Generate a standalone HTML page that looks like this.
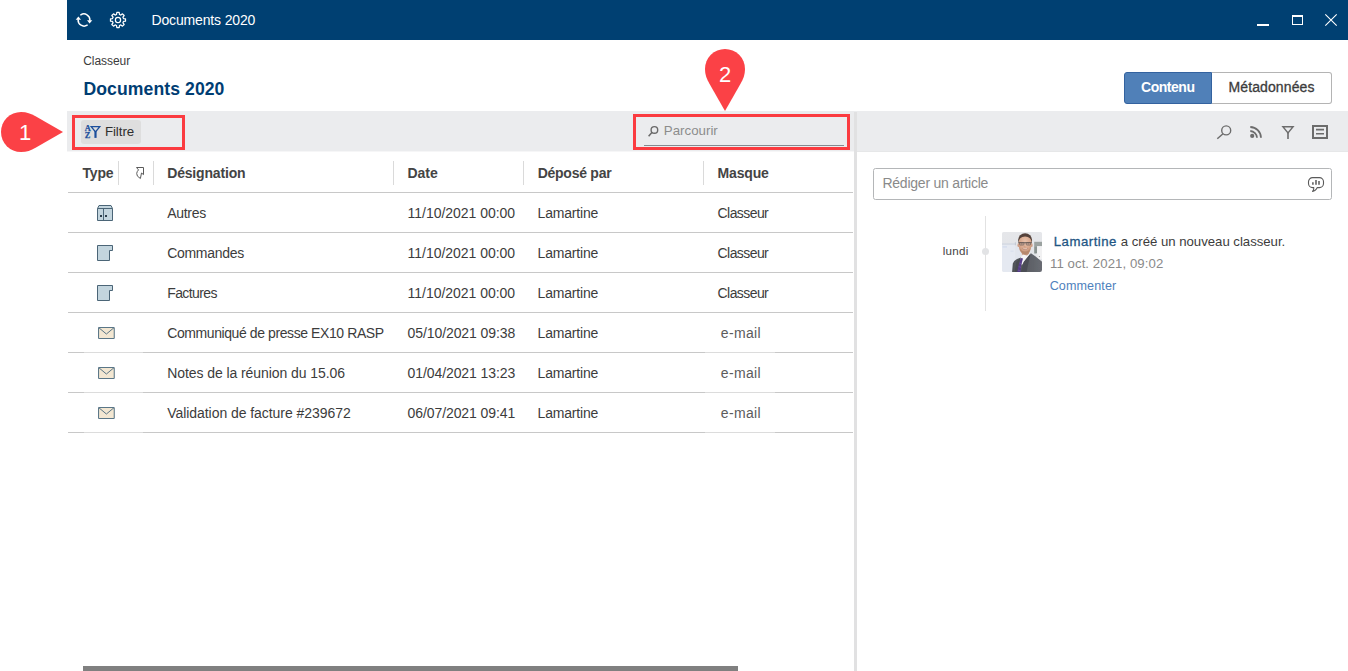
<!DOCTYPE html>
<html lang="fr">
<head>
<meta charset="utf-8">
<title>Documents 2020</title>
<style>
*{box-sizing:border-box;margin:0;padding:0}
html,body{width:1348px;height:671px;overflow:hidden;background:#fff}
body{position:relative;font-family:"Liberation Sans",Arial,sans-serif;color:#333;font-size:14px}
.a{position:absolute}
.t{position:absolute;white-space:nowrap;line-height:1}
svg{position:absolute;overflow:visible}
#titlebar{left:67px;top:0;width:1281px;height:40px;background:#004072}
#tab1{left:1124px;top:72px;width:88px;height:32px;background:#5080b8;border:1px solid #33629f;border-radius:3px 0 0 3px}
#tab2{left:1212px;top:72px;width:120px;height:32px;background:#fff;border:1px solid #b4b4b4;border-left:none;border-radius:0 3px 3px 0}
#ltool{left:67px;top:111px;width:790px;height:41px;background:linear-gradient(#ebecee 0,#ebecee 40px,#f6f6f7 40px)}
#rtool{left:857px;top:111px;width:491px;height:41px;background:linear-gradient(#ebecee 0,#ebecee 40px,#e6e7e8 40px)}
#vdiv{left:854px;top:112px;width:3px;height:559px;background:#e1e1e2}
#filtbtn{left:81px;top:120px;width:60px;height:24px;background:#dedede;border-radius:3px}
.rb{border:3px solid #fb3b40}
#rb1{left:72px;top:115px;width:113px;height:35px}
#rb2{left:633px;top:114px;width:217px;height:36px}
#sline{left:644px;top:145px;width:200px;height:1px;background:#858a90}
.hs{position:absolute;top:161px;width:1px;height:24px;background:#dadada}
.rl{position:absolute;left:68px;width:785px;height:1px;background:#c8c8c8}
#hscroll{left:83px;top:666px;width:655px;height:5px;background:#808080}
#post{left:873px;top:168px;width:459px;height:32px;border:1px solid #b4b6b8;border-radius:2.5px;background:#fff}
#tline{left:985px;top:216px;width:1px;height:95px;background:#e2e2e2}
#tdot{left:982px;top:248px;width:7px;height:7px;border-radius:50%;background:#e2e3e5}
</style>
</head>
<body>
<div id="titlebar" class="a"></div>
<span class="t" style="left:151.5px;top:13.15px;font-size:14px;color:#fff;letter-spacing:-0.153px;">Documents 2020</span>
<svg style="left:74px;top:10px" width="20" height="20" viewBox="-10 -10 20 20">
<g fill="none" stroke="#fff" stroke-width="1.5" stroke-linecap="round">
<path d="M-3.2,-5.2 A6,6 0 0 1 5.9,0.2"/>
<path d="M3.2,5.2 A6,6 0 0 1 -5.9,-0.2"/>
</g>
<path d="M3,0.2 L8.3,0.2 L5.6,3.4 Z" fill="#fff"/>
<path d="M-3,-0.2 L-8.3,-0.2 L-5.6,-3.4 Z" fill="#fff"/>
</svg>
<svg style="left:108px;top:10px" width="20" height="20" viewBox="-10 -10 20 20">
<path d="M-1.48,-5.51 L-1.19,-7.51 L1.19,-7.51 L1.48,-5.51 L2.85,-4.94 L4.47,-6.15 L6.15,-4.47 L4.94,-2.85 L5.51,-1.48 L7.51,-1.19 L7.51,1.19 L5.51,1.48 L4.94,2.85 L6.15,4.47 L4.47,6.15 L2.85,4.94 L1.48,5.51 L1.19,7.51 L-1.19,7.51 L-1.48,5.51 L-2.85,4.94 L-4.47,6.15 L-6.15,4.47 L-4.94,2.85 L-5.51,1.48 L-7.51,1.19 L-7.51,-1.19 L-5.51,-1.48 L-4.94,-2.85 L-6.15,-4.47 L-4.47,-6.15 L-2.85,-4.94 Z" fill="none" stroke="#fff" stroke-width="1.25" stroke-linejoin="round"/>
<circle r="2.6" fill="none" stroke="#fff" stroke-width="1.25"/>
</svg>
<svg style="left:1248px;top:0" width="100" height="40" viewBox="0 0 100 40">
<rect x="9" y="24" width="12" height="2" fill="#fff"/>
<rect x="44.5" y="16" width="10" height="8.5" fill="none" stroke="#fff" stroke-width="1"/>
<rect x="44" y="15" width="11" height="2" fill="#fff"/>
<path d="M77.3,14.3 L88.7,25.7 M88.7,14.3 L77.3,25.7" stroke="#fff" stroke-width="1.1" fill="none"/>
</svg>
<span class="t" style="left:83.2px;top:54.54px;font-size:12px;color:#3b3b3b;letter-spacing:-0.045px;">Classeur</span>
<span class="t" style="left:83.5px;top:80.60px;font-size:17.6px;font-weight:700;color:#003d73;letter-spacing:0.083px;">Documents 2020</span>
<div id="tab1" class="a"></div><div id="tab2" class="a"></div>
<span class="t" style="left:1141px;top:80.15px;font-size:14px;font-weight:700;color:#fff;letter-spacing:-0.467px;">Contenu</span>
<span class="t" style="left:1228.6px;top:80.05px;font-size:14px;color:#3c3c3c;letter-spacing:0.096px;-webkit-text-stroke:0.3px #3c3c3c;">Métadonnées</span>
<div id="ltool" class="a"></div><div id="rtool" class="a"></div><div id="vdiv" class="a"></div>
<div id="filtbtn" class="a"></div>
<svg style="left:84px;top:124px" width="18" height="15" viewBox="0 0 18 15">
<text x="0.7" y="6.9" font-family="'Liberation Serif',serif" font-weight="700" font-size="8.4" fill="#1c4f9c" stroke="#1c4f9c" stroke-width="0.25">A</text>
<text x="0.7" y="13.9" font-family="'Liberation Serif',serif" font-weight="700" font-size="8.4" fill="#1c4f9c" stroke="#1c4f9c" stroke-width="0.25">Z</text>
<path d="M7.2,2.6 L15.8,2.6 L11.5,8 Z" fill="none" stroke="#1c4f9c" stroke-width="1.3" stroke-linejoin="miter"/>
<path d="M11.5,7.3 L11.5,13.9" stroke="#1c4f9c" stroke-width="2.2" fill="none"/>
</svg>
<span class="t" style="left:104.9px;top:125.44px;font-size:13.3px;color:#2f2f2f;letter-spacing:-0.060px;">Filtre</span>
<div id="sline" class="a"></div>
<svg style="left:647px;top:124px" width="13" height="14" viewBox="0 0 13 14">
<circle cx="7.4" cy="5.9" r="3.3" fill="none" stroke="#6a6a6a" stroke-width="1.4"/>
<path d="M5.1,8.3 L1.6,12.2" stroke="#6a6a6a" stroke-width="1.5" fill="none"/>
</svg>
<span class="t" style="left:663.8px;top:124.44px;font-size:13.3px;color:#8c8c8c;letter-spacing:0.005px;">Parcourir</span>
<div id="rb1" class="a rb"></div><div id="rb2" class="a rb"></div>
<svg style="left:1210px;top:120px" width="130" height="24" viewBox="0 0 130 24">
<g fill="none" stroke="#6c6c6c">
<circle cx="16.2" cy="10.4" r="4.5" stroke-width="1.4"/>
<path d="M13,13.7 L7.3,18.7" stroke-width="1.5"/>
<path d="M40.3,7 A11,11 0 0 1 51,17.7" stroke-width="1.8"/>
<path d="M40.3,11 A7,7 0 0 1 47,17.7" stroke-width="1.8"/>
<path d="M72.9,6.8 L83.1,6.8 L78,12.9 Z" stroke-width="1.4"/>
<path d="M78,12.4 L78,18.9" stroke-width="1.6"/>
<rect x="103" y="6" width="14" height="12" stroke-width="2"/>
<path d="M106,9.6 L114,9.6 M106,13.7 L114,13.7" stroke-width="1.6"/>
</g>
<circle cx="42.2" cy="15.9" r="2.1" fill="#6c6c6c"/>
</svg>
<span class="t" style="left:82.5px;top:166.15px;font-size:14px;font-weight:700;color:#444;letter-spacing:-0.160px;">Type</span>
<span class="t" style="left:167.2px;top:166.15px;font-size:14px;font-weight:700;color:#444;letter-spacing:-0.166px;">Désignation</span>
<span class="t" style="left:407.6px;top:166.15px;font-size:14px;font-weight:700;color:#444;letter-spacing:-0.090px;">Date</span>
<span class="t" style="left:537.7px;top:166.15px;font-size:14px;font-weight:700;color:#444;letter-spacing:-0.255px;">Déposé par</span>
<span class="t" style="left:717.6px;top:166.15px;font-size:14px;font-weight:700;color:#444;letter-spacing:-0.188px;">Masque</span>
<div class="hs" style="left:118px"></div>
<div class="hs" style="left:153px"></div>
<div class="hs" style="left:393px"></div>
<div class="hs" style="left:523px"></div>
<div class="hs" style="left:703px"></div>
<svg style="left:136px;top:167px" width="9" height="13" viewBox="0 0 9 13">
<path d="M0.5,0.5 L7.5,0.5 L7.5,7.6 L5.5,6 L4.4,11.5 Q0.3,9.3 0.7,6.4 Q1,4.4 2.5,2.9 Z" fill="none" stroke="#5a5a5a" stroke-width="1" stroke-linejoin="miter"/>
</svg>
<div class="rl" style="top:192px"></div>
<div class="rl" style="top:232px"></div>
<div class="rl" style="top:272px"></div>
<div class="rl" style="top:312px"></div>
<div class="rl" style="top:352px"></div>
<div class="rl" style="top:392px"></div>
<div class="rl" style="top:432px"></div>
<svg style="left:96px;top:204px" width="18" height="18" viewBox="0 0 18 18">
<path d="M1.5,4.5 L3,1.5 L15,1.5 L16.5,4.5 L16.5,16.5 L1.5,16.5 Z" fill="#c3d5de" stroke="#4b6577" stroke-width="1" stroke-linejoin="miter"/>
<path d="M1.5,4.5 L16.5,4.5 M7.5,4.5 L7.5,16.5" stroke="#4b6577" stroke-width="1" fill="none"/>
<rect x="4" y="11" width="2" height="2" fill="#2d3e4b"/><rect x="9" y="11" width="2" height="2" fill="#2d3e4b"/>
</svg>
<span class="t" style="left:167.2px;top:206.15px;font-size:14px;color:#3c3c3c;letter-spacing:-0.286px;">Autres</span>
<span class="t" style="left:407.6px;top:206.15px;font-size:14px;color:#3c3c3c;letter-spacing:-0.028px;">11/10/2021 00:00</span>
<span class="t" style="left:537.6px;top:206.15px;font-size:14px;color:#3c3c3c;letter-spacing:-0.196px;">Lamartine</span>
<span class="t" style="left:717.6px;top:206.15px;font-size:14px;color:#3c3c3c;letter-spacing:-0.581px;">Classeur</span>
<svg style="left:96px;top:244px" width="18" height="18" viewBox="0 0 18 18">
<path d="M1.5,1.5 L16.5,1.5 L16.5,6.5 L13.5,6.5 L13.5,16.5 L1.5,16.5 Z" fill="#c3d5de" stroke="#4b6577" stroke-width="1" stroke-linejoin="miter"/>
</svg>
<span class="t" style="left:167.2px;top:246.15px;font-size:14px;color:#3c3c3c;letter-spacing:-0.292px;">Commandes</span>
<span class="t" style="left:407.6px;top:246.15px;font-size:14px;color:#3c3c3c;letter-spacing:-0.028px;">11/10/2021 00:00</span>
<span class="t" style="left:537.6px;top:246.15px;font-size:14px;color:#3c3c3c;letter-spacing:-0.196px;">Lamartine</span>
<span class="t" style="left:717.6px;top:246.15px;font-size:14px;color:#3c3c3c;letter-spacing:-0.581px;">Classeur</span>
<svg style="left:96px;top:284px" width="18" height="18" viewBox="0 0 18 18">
<path d="M1.5,1.5 L16.5,1.5 L16.5,6.5 L13.5,6.5 L13.5,16.5 L1.5,16.5 Z" fill="#c3d5de" stroke="#4b6577" stroke-width="1" stroke-linejoin="miter"/>
</svg>
<span class="t" style="left:167.2px;top:286.15px;font-size:14px;color:#3c3c3c;letter-spacing:-0.590px;">Factures</span>
<span class="t" style="left:407.6px;top:286.15px;font-size:14px;color:#3c3c3c;letter-spacing:-0.028px;">11/10/2021 00:00</span>
<span class="t" style="left:537.6px;top:286.15px;font-size:14px;color:#3c3c3c;letter-spacing:-0.196px;">Lamartine</span>
<span class="t" style="left:717.6px;top:286.15px;font-size:14px;color:#3c3c3c;letter-spacing:-0.581px;">Classeur</span>
<svg style="left:97px;top:326px" width="19" height="14" viewBox="0 0 19 14">
<rect x="1.55" y="1.5" width="15.7" height="11" rx="0.6" fill="#f3e7d2" stroke="#5a7687" stroke-width="1.05"/>
<path d="M1.8,1.7 L9.4,8 L17,1.7" fill="none" stroke="#5a7687" stroke-width="1"/>
</svg>
<span class="t" style="left:167.2px;top:326.15px;font-size:14px;color:#3c3c3c;letter-spacing:-0.410px;">Communiqué de presse EX10 RASP</span>
<span class="t" style="left:407.6px;top:326.15px;font-size:14px;color:#3c3c3c;letter-spacing:-0.094px;">05/10/2021 09:38</span>
<span class="t" style="left:537.6px;top:326.15px;font-size:14px;color:#3c3c3c;letter-spacing:-0.196px;">Lamartine</span>
<span class="t" style="left:720.8px;top:326.15px;font-size:14px;color:#5c5c5c;letter-spacing:0.346px;">e-mail</span>
<svg style="left:97px;top:366px" width="19" height="14" viewBox="0 0 19 14">
<rect x="1.55" y="1.5" width="15.7" height="11" rx="0.6" fill="#f3e7d2" stroke="#5a7687" stroke-width="1.05"/>
<path d="M1.8,1.7 L9.4,8 L17,1.7" fill="none" stroke="#5a7687" stroke-width="1"/>
</svg>
<span class="t" style="left:167.2px;top:366.15px;font-size:14px;color:#3c3c3c;letter-spacing:-0.074px;">Notes de la réunion du 15.06</span>
<span class="t" style="left:407.6px;top:366.15px;font-size:14px;color:#3c3c3c;letter-spacing:-0.094px;">01/04/2021 13:23</span>
<span class="t" style="left:537.6px;top:366.15px;font-size:14px;color:#3c3c3c;letter-spacing:-0.196px;">Lamartine</span>
<span class="t" style="left:720.8px;top:366.15px;font-size:14px;color:#5c5c5c;letter-spacing:0.346px;">e-mail</span>
<svg style="left:97px;top:406px" width="19" height="14" viewBox="0 0 19 14">
<rect x="1.55" y="1.5" width="15.7" height="11" rx="0.6" fill="#f3e7d2" stroke="#5a7687" stroke-width="1.05"/>
<path d="M1.8,1.7 L9.4,8 L17,1.7" fill="none" stroke="#5a7687" stroke-width="1"/>
</svg>
<span class="t" style="left:167.2px;top:406.15px;font-size:14px;color:#3c3c3c;letter-spacing:-0.052px;">Validation de facture #239672</span>
<span class="t" style="left:407.6px;top:406.15px;font-size:14px;color:#3c3c3c;letter-spacing:-0.094px;">06/07/2021 09:41</span>
<span class="t" style="left:537.6px;top:406.15px;font-size:14px;color:#3c3c3c;letter-spacing:-0.196px;">Lamartine</span>
<span class="t" style="left:720.8px;top:406.15px;font-size:14px;color:#5c5c5c;letter-spacing:0.346px;">e-mail</span>
<div class="a" style="left:84px;top:352px;width:59px;height:1px;background:#dcdcdc"></div><div class="a" style="left:705px;top:352px;width:70px;height:1px;background:#dcdcdc"></div>
<div class="a" style="left:84px;top:392px;width:59px;height:1px;background:#dcdcdc"></div><div class="a" style="left:705px;top:392px;width:70px;height:1px;background:#dcdcdc"></div>
<div class="a" style="left:84px;top:432px;width:59px;height:1px;background:#dcdcdc"></div><div class="a" style="left:705px;top:432px;width:70px;height:1px;background:#dcdcdc"></div>
<div id="hscroll" class="a"></div>
<div id="post" class="a"></div>
<span class="t" style="left:882.4px;top:176.15px;font-size:14px;color:#8a8a8a;letter-spacing:-0.219px;">Rédiger un article</span>
<svg style="left:1307px;top:176px" width="18" height="17" viewBox="0 0 18 17">
<path d="M5.6,1.6 L12.4,1.6 A4.1,4.1 0 0 1 16.5,5.7 L16.5,7.5 A4.1,4.1 0 0 1 12.4,11.6 L10.3,11.6 Q8.4,15.4 5.6,15.4 Q7,13.6 6.8,11.6 L5.6,11.6 A4.1,4.1 0 0 1 1.5,7.5 L1.5,5.7 A4.1,4.1 0 0 1 5.6,1.6 Z" fill="#fff" stroke="#5a5a5a" stroke-width="1.1" stroke-linejoin="round"/>
<path d="M5.9,6.2 L5.9,8.8 M9,4.1 L9,8.8 M12,5.1 L12,8.8" stroke="#5a5a5a" stroke-width="1.5" fill="none"/>
</svg>
<div id="tline" class="a"></div><div id="tdot" class="a"></div>
<span class="t" style="left:942.7px;top:244.88px;font-size:11.6px;color:#444;letter-spacing:0.260px;">lundi</span>
<svg style="left:1002px;top:232px" width="40" height="40" viewBox="0 0 40 40">
<defs><clipPath id="avc"><rect width="40" height="40" rx="2.2"/></clipPath>
<filter id="avb" x="-10%" y="-10%" width="120%" height="120%"><feGaussianBlur stdDeviation="0.6"/></filter>
<radialGradient id="skin" cx="0.5" cy="0.3" r="0.75"><stop offset="0" stop-color="#e9c3ad"/><stop offset="0.55" stop-color="#d8a88d"/><stop offset="1" stop-color="#b98a70"/></radialGradient>
<linearGradient id="suit" x1="0" y1="0" x2="1" y2="0"><stop offset="0" stop-color="#4f5258"/><stop offset="0.45" stop-color="#5a5d63"/><stop offset="1" stop-color="#6a6d74"/></linearGradient>
<linearGradient id="bgg" x1="0" y1="0" x2="0" y2="1"><stop offset="0" stop-color="#e6e7ea"/><stop offset="1" stop-color="#dfe2e7"/></linearGradient>
</defs>
<g clip-path="url(#avc)"><rect width="40" height="40" fill="#e3e5e9"/>
<g filter="url(#avb)">
<rect x="-3" y="-3" width="46" height="46" fill="url(#bgg)"/>
<rect x="-3" y="12.2" width="16.4" height="32" fill="#e5e9f1"/>
<rect x="-3" y="11.6" width="16.4" height="0.9" fill="#c9cfdb"/>
<rect x="12.9" y="10.3" width="0.8" height="3" fill="#b9c0cd"/>
<rect x="13.6" y="14" width="5" height="14" fill="#e1e5ed"/>
<rect x="0.5" y="14.6" width="4.5" height="0.7" fill="#c3d0ea"/>
<rect x="8.5" y="18.8" width="3" height="0.6" fill="#cdd6ea"/>
<rect x="32.2" y="9.8" width="11" height="4.4" fill="#9ba2a0"/>
<rect x="32.2" y="14.2" width="2.9" height="7.3" fill="#8a9390"/>
<rect x="35.1" y="14.2" width="8" height="13" fill="#f1f1f2"/>
<rect x="34.4" y="21.5" width="2" height="4" fill="#e9e9ea"/>
<circle cx="37.4" cy="24.6" r="0.6" fill="#8d8d8d"/>
<path d="M19.4,19 L20.4,25 L26,25 L28,18 Z" fill="#c4957b"/>
<path d="M10,41 L10.8,31.6 Q11.6,28.6 15,27 L19,25.4 L24,26 L28.6,21 L33.6,24.6 L41,30.4 L41,41 Z" fill="url(#suit)"/>
<path d="M18.6,26 L20.6,22.4 L25,23.6 L28.7,20.6 L29,21.6 L22.4,29.4 L19.6,33.4 Z" fill="#f5f5f7"/>
<path d="M18.9,26 L21,26.6 L19.2,33 L18.4,41 L14.8,41 L16.6,33 Z" fill="#563c88"/>
<path d="M17.3,31 L19.8,31.8 M16.6,34.6 L19,35.4 M15.8,38 L18.6,38.8" stroke="#7d68ad" stroke-width="0.5" fill="none"/>
<path d="M28.8,21 L21.6,30 L18.6,41 L24.4,41 L26,33 Z" fill="#4b4e54"/>
<path d="M18.4,25.8 L16.4,33.4 L15,41 L12.6,41 L14.4,30 Z" fill="#484b51"/>
<ellipse cx="23.1" cy="8" rx="7" ry="6.8" fill="#54423a"/>
<ellipse cx="16.4" cy="13.2" rx="0.9" ry="1.9" fill="#cf9f86"/><ellipse cx="29.7" cy="13.2" rx="0.9" ry="1.9" fill="#cf9f86"/>
<path d="M16.7,10 Q16.6,5 23.1,4.4 Q29.5,5 29.5,10 L29.2,15 Q28.6,19.6 25.6,21.4 Q23.1,22.8 20.6,21.4 Q17.4,19.6 16.9,15 Z" fill="url(#skin)"/>
<path d="M17.6,16.4 Q19,21.6 23.1,22.2 Q27.2,21.6 28.6,16.2 Q26.6,19.4 23.1,19.6 Q19.6,19.4 17.6,16.4 Z" fill="#b18468" opacity="0.75"/>
<path d="M16.5,10.4 L29.7,10.4 L29.7,11.2 L16.5,11.2 Z" fill="#3f3b3d"/>
<rect x="17.7" y="10.8" width="4.2" height="2.2" rx="0.5" fill="#d9b8a8" fill-opacity="0.55" stroke="#4a4546" stroke-width="0.55"/>
<rect x="24.3" y="10.8" width="4.2" height="2.2" rx="0.5" fill="#d9b8a8" fill-opacity="0.55" stroke="#4a4546" stroke-width="0.55"/>
<path d="M19,11.9 L20.6,11.9 M25.6,11.9 L27.2,11.9" stroke="#5b4a44" stroke-width="0.5"/>
<path d="M20.4,16.3 Q23.1,18.6 25.8,16.2 Q23.1,17 20.4,16.3 Z" fill="#f1e6e2"/>
<path d="M20.2,16.1 Q23.1,19.2 26,16" fill="none" stroke="#a87462" stroke-width="0.5"/>
<path d="M22.4,13.4 L22,15 L23.8,15" fill="none" stroke="#c08f77" stroke-width="0.5"/>
</g></g>
</svg>
<span class="t" style="left:1053.7px;top:234.83px;font-size:13.2px;color:#1f5684;letter-spacing:0.516px;-webkit-text-stroke:0.3px #1f5684;">Lamartine</span>
<span class="t" style="left:1120.8px;top:234.63px;font-size:13.2px;color:#3c3c3c;letter-spacing:-0.020px;">a créé un nouveau classeur.</span>
<span class="t" style="left:1050px;top:256.63px;font-size:13.2px;color:#8a8a8a;letter-spacing:0.071px;">11 oct. 2021, 09:02</span>
<span class="t" style="left:1049.7px;top:280.33px;font-size:12.6px;color:#4f81bd;letter-spacing:0.089px;">Commenter</span>
<svg style="left:0;top:108px" width="68" height="48" viewBox="0 108 68 48">
<path d="M21,112 C27,112 30.5,113.6 36,116.6 L63,132 L36,147.4 C30.5,150.4 27,152 21,152 A20,20 0 0 1 21,112 Z" fill="#fb4146"/>
<text x="25.2" y="140" text-anchor="middle" font-family="'Liberation Sans',Arial,sans-serif" font-size="22" fill="#fff">1</text>
</svg>
<svg style="left:700px;top:44px" width="50" height="70" viewBox="700 44 50 70">
<path d="M745,69 C745,75 743.4,78.5 740.4,84 L725,111 L709.6,84 C706.6,78.5 705,75 705,69 A20,20 0 0 1 745,69 Z" fill="#fb4146"/>
<text x="725" y="82.3" text-anchor="middle" font-family="'Liberation Sans',Arial,sans-serif" font-size="22" fill="#fff">2</text>
</svg>
</body>
</html>
